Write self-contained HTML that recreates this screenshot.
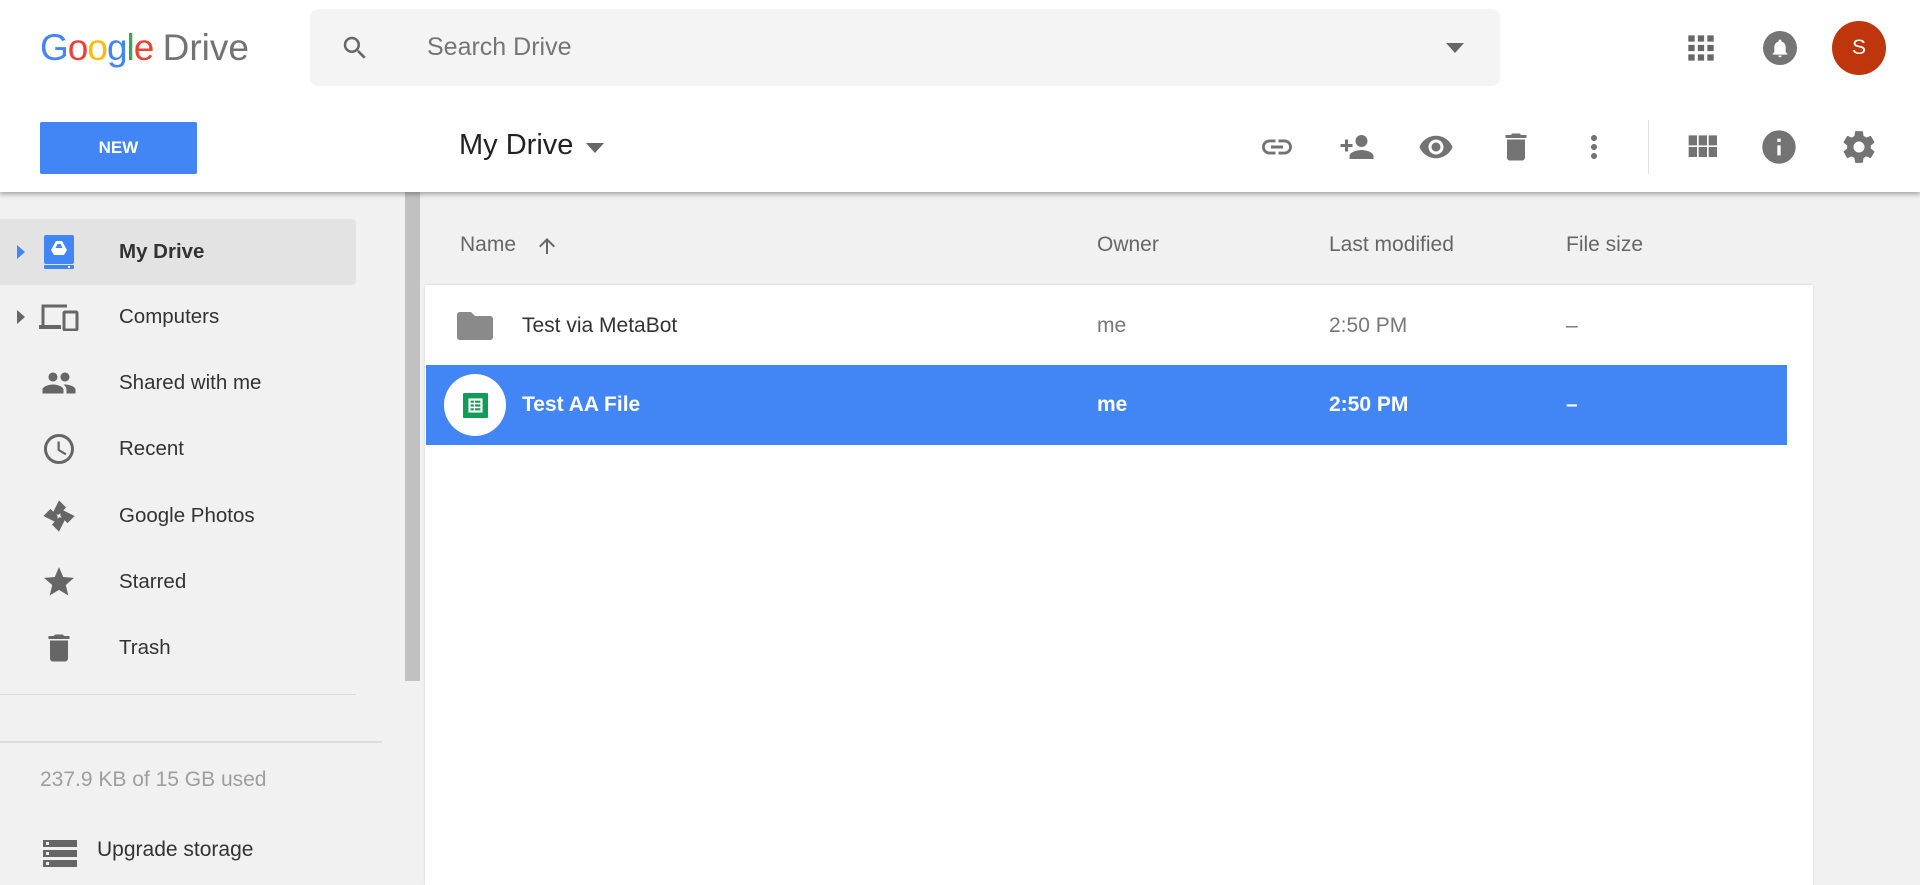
<!DOCTYPE html>
<html><head><meta charset="utf-8"><style>
*{margin:0;padding:0;box-sizing:border-box}
body{width:1920px;height:876px;overflow:hidden;background:#f1f1f1;font-family:"Liberation Sans",Arial,sans-serif;position:relative}
.abs{position:absolute}
header{position:absolute;left:0;top:0;width:1920px;height:192px;background:#fff;box-shadow:0 2px 5px rgba(0,0,0,.35);z-index:5}
.ico{position:absolute;transform:translate(-50%,-50%)}
.nav{position:absolute;left:0;width:356px;height:66px}
.nav span{position:absolute;left:119px;top:50%;transform:translateY(-50%);font-size:20.5px;color:#333}
.nav svg{position:absolute;left:59px;top:50%;transform:translate(-50%,-50%)}
.col{position:absolute;font-size:21px;color:#666}
.row{position:absolute;left:426px;width:1361px;height:80px;font-size:21px}
.row div{position:absolute;top:50%;transform:translateY(-50%)}
</style></head><body>
<header>
  <div class="abs" style="left:40px;top:26px;font-size:37px;letter-spacing:-1px;line-height:44px"><span style="color:#4285f4">G</span><span style="color:#ea4335">o</span><span style="color:#fbbc05">o</span><span style="color:#4285f4">g</span><span style="color:#34a853">l</span><span style="color:#ea4335">e</span> <span style="color:#737373;letter-spacing:0">Drive</span></div>
  <div class="abs" style="left:310px;top:9px;width:1190px;height:77px;background:#f4f4f4;border-radius:8px"></div>
  <svg class="ico" style="left:355px;top:48px" width="30" height="30" viewBox="0 0 24 24"><path fill="#666" d="M15.5 14h-.79l-.28-.27A6.47 6.47 0 0 0 16 9.5 6.5 6.5 0 1 0 9.5 16c1.61 0 3.09-.59 4.23-1.57l.27.28v.79l5 4.99L20.49 19l-4.99-5zm-6 0C7.01 14 5 11.99 5 9.5S7.01 5 9.5 5 14 7.01 14 9.5 11.99 14 9.5 14z"/></svg>
  <div class="abs" style="left:427px;top:33px;font-size:25px;color:#757575">Search Drive</div>
  <svg class="ico" style="left:1455px;top:48px" width="18" height="10"><path fill="#666" d="M0 0h18L9 10z"/></svg>
  <svg class="ico" style="left:1701px;top:48px" width="38" height="38" viewBox="0 0 24 24"><path fill="#666" d="M4 8h4V4H4v4zm6 12h4v-4h-4v4zm-6 0h4v-4H4v4zm0-6h4v-4H4v4zm6 0h4v-4h-4v4zm6-10v4h4V4h-4zm-6 4h4V4h-4v4zm6 6h4v-4h-4v4zm0 6h4v-4h-4v4z"/></svg>
  <svg class="ico" style="left:1780px;top:48px" width="34" height="34" viewBox="0 0 24 24"><circle cx="12" cy="12" r="12" fill="#757575"/><path fill="#fff" d="M12 18.5c.7 0 1.2-.5 1.2-1.2h-2.4c0 .7.5 1.2 1.2 1.2zm4-3.6v-3.4c0-2-1.1-3.6-3-4.1v-.4c0-.5-.4-1-1-1s-1 .5-1 1v.4c-1.9.5-3 2.1-3 4.1v3.4l-1.2 1.2v.6h10.4v-.6L16 14.9z"/></svg>
  <div class="abs" style="left:1832px;top:21px;width:54px;height:54px;border-radius:50%;background:#bf360c;color:#fff;font-size:21px;text-align:center;line-height:54px">S</div>

  <div class="abs" style="left:40px;top:122px;width:157px;height:52px;background:#4285f4;border-radius:2px;color:#fff;font-weight:bold;font-size:17px;text-align:center;line-height:52px">NEW</div>
  <div class="abs" style="left:459px;top:129px;font-size:29px;color:#222">My Drive</div>
  <svg class="ico" style="left:595px;top:148px" width="18" height="10"><path fill="#666" d="M0 0h18L9 10z"/></svg>

  <svg class="ico" style="left:1277px;top:147px" width="36" height="36" viewBox="0 0 24 24"><path fill="#737373" d="M3.9 12c0-1.71 1.39-3.1 3.1-3.1h4V7H7c-2.76 0-5 2.240-5 5s2.24 5 5 5h4v-1.9H7c-1.71 0-3.1-1.39-3.1-3.1zM8 13h8v-2H8v2zm9-6h-4v1.9h4c1.71 0 3.1 1.39 3.1 3.1s-1.39 3.1-3.1 3.1h-4V17h4c2.76 0 5-2.24 5-5s-2.24-5-5-5z"/></svg>
  <svg class="ico" style="left:1357px;top:147px" width="36" height="36" viewBox="0 0 24 24"><path fill="#737373" d="M15 12c2.21 0 4-1.790 4-4s-1.79-4-4-4-4 1.79-4 4 1.79 4 4 4zm-9-2V7H4v3H1v2h3v3h2v-3h3v-2H6zm9 4c-2.67 0-8 1.34-8 4v2h16v-2c0-2.66-5.33-4-8-4z"/></svg>
  <svg class="ico" style="left:1436px;top:147px" width="36" height="36" viewBox="0 0 24 24"><path fill="#737373" d="M12 4.5C7 4.5 2.73 7.61 1 12c1.73 4.39 6 7.5 11 7.5s9.27-3.11 11-7.5c-1.73-4.39-6-7.5-11-7.5zM12 17c-2.76 0-5-2.24-5-5s2.24-5 5-5 5 2.24 5 5-2.24 5-5 5zm0-8c-1.66 0-3 1.34-3 3s1.34 3 3 3 3-1.34 3-3-1.34-3-3-3z"/></svg>
  <svg class="ico" style="left:1516px;top:147px" width="36" height="36" viewBox="0 0 24 24"><path fill="#737373" d="M6 19c0 1.1.9 2 2 2h8c1.1 0 2-.9 2-2V7H6v12zM19 4h-3.5l-1-1h-5l-1 1H5v2h14V4z"/></svg>
  <svg class="ico" style="left:1594px;top:147px" width="36" height="36" viewBox="0 0 24 24"><path fill="#737373" d="M12 8c1.1 0 2-.9 2-2s-.9-2-2-2-2 .9-2 2 .9 2 2 2zm0 2c-1.1 0-2 .9-2 2s.9 2 2 2 2-.9 2-2-.9-2-2-2zm0 6c-1.1 0-2 .9-2 2s.9 2 2 2 2-.9 2-2-.9-2-2-2z"/></svg>
  <div class="abs" style="left:1648px;top:120px;width:1px;height:54px;background:#e0e0e0"></div>
  <svg class="ico" style="left:1702px;top:147px" width="40" height="40" viewBox="0 0 24 24"><path fill="#737373" d="M4 11h5V5H4v6zm0 7h5v-6H4v6zm6 0h5v-6h-5v6zm6 0h5v-6h-5v6zm-6-7h5V5h-5v6zm6-6v6h5V5h-5z"/></svg>
  <svg class="ico" style="left:1779px;top:147px" width="40" height="40" viewBox="0 0 24 24"><path fill="#737373" d="M12 2C6.48 2 2 6.48 2 12s4.48 10 10 10 10-4.48 10-10S17.52 2 12 2zm1 15h-2v-6h2v6zm0-8h-2V7h2v2z"/></svg>
  <svg class="ico" style="left:1859px;top:147px" width="38" height="38" viewBox="0 0 24 24"><path fill="#737373" d="M19.43 12.98c.04-.32.07-.64.07-.98s-.03-.66-.07-.98l2.11-1.65c.19-.15.24-.42.12-.64l-2-3.46c-.12-.22-.39-.3-.61-.22l-2.49 1c-.52-.4-1.08-.73-1.690-.98l-.38-2.65A.49.49 0 0 0 14 2h-4c-.25 0-.46.18-.49.42l-.38 2.65c-.61.25-1.17.59-1.69.98l-2.49-1c-.23-.09-.49 0-.61.22l-2 3.46c-.13.22-.07.49.12.64l2.11 1.65c-.04.32-.07.65-.07.98s.03.66.07.98l-2.11 1.65c-.19.15-.24.42-.12.64l2 3.46c.12.22.39.3.61.22l2.49-1c.52.4 1.08.73 1.69.98l.38 2.65c.03.24.24.42.49.42h4c.25 0 .46-.18.49-.42l.38-2.65c.61-.25 1.17-.59 1.69-.98l2.49 1c.23.09.49 0 .61-.22l2-3.46c.12-.22.07-.49-.12-.64l-2.11-1.65zM12 15.5c-1.93 0-3.5-1.57-3.5-3.5s1.57-3.5 3.5-3.5 3.5 1.57 3.5 3.5-1.57 3.5-3.5 3.5z"/></svg>
</header>

<div class="nav" style="top:219px;background:#e3e3e3;border-radius:0 4px 4px 0">
  <svg class="abs" style="left:17px!important;top:50%;transform:translateY(-50%)" width="8" height="14"><path fill="#4285f4" d="M0 0l8 7-8 7z"/></svg>
  <svg width="30" height="34" viewBox="0 0 30 34"><rect x="0" y="0" width="30" height="29" rx="2" fill="#4285f4"/><rect x="0" y="30" width="30" height="4" rx="1" fill="#4285f4"/><rect x="24" y="31" width="2" height="2" fill="#fff"/><path fill="#fff" d="M12 6h6l5 9-3 5H10l-3-5z"/><path fill="#4285f4" d="M13.5 9h3l2 4h-7z"/></svg>
  <span style="font-weight:bold">My Drive</span></div>
<div class="nav" style="top:284px">
  <svg class="abs" style="left:17px!important;top:50%;transform:translateY(-50%)" width="8" height="14"><path fill="#666" d="M0 0l8 7-8 7z"/></svg>
  <svg width="40" height="28" viewBox="0 0 40 28"><path fill="none" stroke="#666" stroke-width="3" d="M4 24V3h24"/><rect x="0" y="22" width="22" height="4" fill="#666"/><rect x="25" y="9" width="13" height="18" rx="1" fill="none" stroke="#666" stroke-width="3"/></svg>
  <span>Computers</span></div>
<div class="nav" style="top:350px"><svg width="36" height="36" viewBox="0 0 24 24"><path fill="#666" d="M16 11c1.66 0 2.99-1.34 2.99-3S17.66 5 16 5c-1.66 0-3 1.34-3 3s1.34 3 3 3zm-8 0c1.66 0 2.99-1.34 2.99-3S9.66 5 8 5C6.34 5 5 6.34 5 8s1.34 3 3 3zm0 2c-2.33 0-7 1.17-7 3.5V19h14v-2.5c0-2.33-4.67-3.5-7-3.5zm8 0c-.29 0-.62.02-.97.05 1.16.84 1.97 1.97 1.97 3.45V19h6v-2.5c0-2.33-4.67-3.5-7-3.5z"/></svg><span>Shared with me</span></div>
<div class="nav" style="top:416px"><svg width="36" height="36" viewBox="0 0 24 24"><path fill="#666" d="M11.99 2C6.47 2 2 6.48 2 12s4.47 10 9.99 10C17.52 22 22 17.52 22 12S17.52 2 11.99 2zM12 20c-4.42 0-8-3.58-8-8s3.58-8 8-8 8 3.58 8 8-3.58 8-8 8zm.5-13H11v6l5.25 3.15.75-1.23-4.5-2.67z"/></svg><span>Recent</span></div>
<div class="nav" style="top:483px"><svg width="34" height="34" viewBox="0 0 24 24"><path fill="#666" d="M12 1v10H7zM23 12H13V7zM12 23V13h5zM1 12h10v5z"/><path fill="#666" d="M12 1l0 10 5-5zM23 12H13l5 5zM12 23V13l-5 5zM1 12h10L6 7z"/></svg><span>Google Photos</span></div>
<div class="nav" style="top:549px"><svg width="36" height="36" viewBox="0 0 24 24"><path fill="#666" d="M12 17.27L18.18 21l-1.64-7.03L22 9.24l-7.19-.61L12 2 9.19 8.63 2 9.24l5.46 4.73L5.82 21z"/></svg><span>Starred</span></div>
<div class="nav" style="top:615px"><svg width="36" height="36" viewBox="0 0 24 24"><path fill="#666" d="M6 19c0 1.1.9 2 2 2h8c1.1 0 2-.9 2-2V7H6v12zM19 4h-3.5l-1-1h-5l-1 1H5v2h14V4z"/></svg><span>Trash</span></div>
<div class="abs" style="left:0;top:694px;width:356px;height:1px;background:#ddd"></div>
<div class="abs" style="left:0;top:741px;width:382px;height:2px;background:#ddd"></div>
<div class="abs" style="left:40px;top:768px;font-size:21px;color:#9e9e9e">237.9 KB of 15 GB used</div>
<svg class="abs" style="left:43px;top:840px" width="34" height="28" viewBox="0 0 34 28"><rect y="0" width="34" height="7" fill="#666"/><rect y="10" width="34" height="7" fill="#666"/><rect y="20" width="34" height="7" fill="#666"/><rect x="3" y="2" width="3" height="3" fill="#f1f1f1"/><rect x="3" y="12" width="3" height="3" fill="#f1f1f1"/><rect x="3" y="22" width="3" height="3" fill="#f1f1f1"/></svg>
<div class="abs" style="left:97px;top:838px;font-size:21px;color:#333">Upgrade storage</div>

<div class="abs" style="left:405px;top:192px;width:15px;height:489px;background:#c1c1c1"></div>

<div class="col" style="left:460px;top:233px">Name</div>
<svg class="abs" style="left:535px;top:234px" width="24" height="24" viewBox="0 0 24 24"><path fill="#666" d="M4 12l1.41 1.41L11 7.83V20h2V7.83l5.58 5.59L20 12l-8-8-8 8z"/></svg>
<div class="col" style="left:1097px;top:233px">Owner</div>
<div class="col" style="left:1329px;top:233px">Last modified</div>
<div class="col" style="left:1566px;top:233px">File size</div>

<div class="abs" style="left:425px;top:285px;width:1388px;height:600px;background:#fff;box-shadow:0 0 2px rgba(0,0,0,.15)"></div>
<div class="row" style="top:286px;color:#333">
  <svg class="abs" style="left:31px;top:26px" width="36" height="28" viewBox="0 0 36 28"><path fill="#8a8a8a" d="M3 0h11l4 4h15c1.7 0 3 1.3 3 3v18c0 1.7-1.3 3-3 3H3c-1.7 0-3-1.3-3-3V3c0-1.7 1.3-3 3-3z"/></svg>
  <div style="left:96px">Test via MetaBot</div>
  <div style="left:671px;color:#777">me</div>
  <div style="left:903px;color:#777">2:50 PM</div>
  <div style="left:1140px;color:#777">–</div>
</div>
<div class="row" style="top:365px;background:#4285f4;color:#fff;font-weight:bold">
  <div style="left:18px;width:62px;height:62px;border-radius:50%;background:#fff"></div>
  <svg class="abs" style="left:37px;top:28px" width="25" height="25" viewBox="0 0 23 23"><rect width="23" height="23" rx="1" fill="#0f9d58"/><rect x="5" y="5" width="13" height="13" fill="#fff"/><path fill="#0f9d58" d="M7 7h3v2H7zM11 7h5v2h-5zM7 10.5h3v2H7zM11 10.5h5v2h-5zM7 14h3v2H7zM11 14h5v2h-5z"/></svg>
  <div style="left:96px">Test AA File</div>
  <div style="left:671px">me</div>
  <div style="left:903px">2:50 PM</div>
  <div style="left:1140px">–</div>
</div>
</body></html>
